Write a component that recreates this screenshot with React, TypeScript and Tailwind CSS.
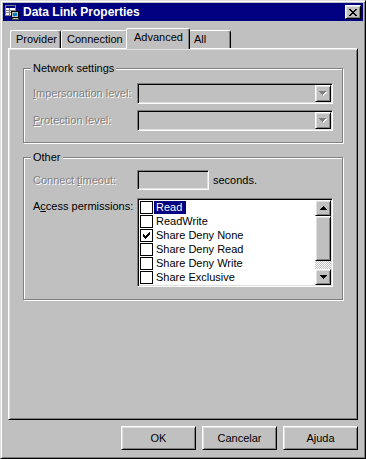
import React from "react";

// classic 3D frames
const raised =
  "border border-t-white border-l-white border-r-black border-b-black shadow-[inset_1px_1px_#dfdfdf,inset_-1px_-1px_#808080]";
const sunken =
  "border border-t-[#808080] border-l-[#808080] border-r-white border-b-white shadow-[inset_1px_1px_#000,inset_-1px_-1px_#dfdfdf]";
const etched = "border border-[#808080] shadow-[inset_1px_1px_#fff,1px_1px_#fff]";
const disabled = "text-[#808080] [text-shadow:1px_1px_0_#fff]";

const closeX = ["xx....xx", ".xx..xx.", "..xxxx..", "...xx...", "..xxxx..", ".xx..xx.", "xx....xx"];
const check = ["......x", ".....xx", "x...xxx", "xx.xxx.", "xxxxx..", ".xxx...", "..x...."];
const up = ["...x...", "..xxx..", ".xxxxx.", "xxxxxxx"];
const down = [...up].reverse();

const Pixels = ({ rows, fill, dx = 0, dy = 0 }: { rows: string[]; fill: string; dx?: number; dy?: number }) => (
  <>
    {rows.flatMap((r, y) =>
      r.split("").map((c, x) =>
        c === "x" ? <rect key={`${x}-${y}`} x={x + dx} y={y + dy} width={1} height={1} fill={fill} /> : null
      )
    )}
  </>
);

const Glyph = ({ rows, fill = "#000" }: { rows: string[]; fill?: string }) => (
  <svg width={rows[0].length} height={rows.length} shapeRendering="crispEdges">
    <Pixels rows={rows} fill={fill} />
  </svg>
);

const DisabledArrow = () => (
  <svg width={8} height={5} shapeRendering="crispEdges">
    <Pixels rows={down} fill="#fff" dx={1} dy={1} />
    <Pixels rows={down} fill="#808080" />
  </svg>
);

const AppIcon = () => (
  <svg width={16} height={16} shapeRendering="crispEdges">
    <rect x={1} y={1} width={11} height={11} fill="#808080" />
    <rect x={2} y={2} width={9} height={9} fill="#fff" />
    <rect x={2} y={2} width={9} height={2} fill="#000080" />
    <rect x={2} y={6} width={9} height={1} fill="#808080" />
    <rect x={2} y={8} width={9} height={1} fill="#808080" />
    <rect x={5} y={4} width={1} height={7} fill="#808080" />
    <rect x={7} y={7} width={8} height={7} fill="#000" />
    <rect x={8} y={8} width={6} height={5} fill="#c0c0c0" />
    <rect x={9} y={9} width={4} height={3} fill="#0080c0" />
    <rect x={8} y={14} width={7} height={2} fill="#404040" />
    <rect x={9} y={14} width={5} height={1} fill="#c0c0c0" />
  </svg>
);

const Tab = ({ label, width, active }: { label: string; width: string; active?: boolean }) =>
  active ? (
    <div
      className={`${width} h-[21px] -mb-px -mx-[2px] relative z-10 flex items-center pl-[7px] pb-[3px] bg-[#c0c0c0] border border-b-0 border-t-white border-l-white border-r-black rounded-tl-[2px] rounded-tr-[3px] shadow-[inset_-1px_0_#808080]`}
    >
      {label}
    </div>
  ) : (
    <div
      className={`${width} h-[18px] flex items-center pl-[5px] bg-[#c0c0c0] border border-b-0 border-t-white border-l-white border-r-black rounded-tl-[2px] rounded-tr-[3px] shadow-[inset_-1px_0_#808080]`}
    >
      {label}
    </div>
  );

const Group = ({ label, className, children }: { label: string; className: string; children: React.ReactNode }) => (
  <div className={`relative px-[9px] ${etched} ${className}`}>
    <span className="absolute left-[7px] -top-[7px] px-[2px] bg-[#c0c0c0]">{label}</span>
    {children}
  </div>
);

const Combo = () => (
  <div className={`w-[196px] h-[21px] p-px flex justify-end bg-[#c0c0c0] ${sunken}`}>
    <div className={`w-[16px] h-full flex items-center justify-center bg-[#c0c0c0] ${raised}`}>
      <DisabledArrow />
    </div>
  </div>
);

const permissions = [
  { label: "Read", checked: false, selected: true },
  { label: "ReadWrite", checked: false },
  { label: "Share Deny None", checked: true },
  { label: "Share Deny Read", checked: false },
  { label: "Share Deny Write", checked: false },
  { label: "Share Exclusive", checked: false },
];

const ListBox = () => (
  <div className={`w-[196px] h-[89px] p-px flex bg-white ${sunken}`}>
    <div className="flex-1 flex flex-col">
      {permissions.map((p) => (
        <div key={p.label} className="h-[14px] flex items-center pl-px">
          <div className="w-[13px] h-[13px] flex items-center justify-center bg-white border border-black">
            {p.checked && <Glyph rows={check} />}
          </div>
          <span
            className={`ml-px pl-[2px] pr-[4px] h-[13px] leading-[13px] ${p.selected ? "bg-[#000080] text-white" : ""}`}
          >
            {p.label}
          </span>
        </div>
      ))}
    </div>
    <div className="w-[16px] flex flex-col bg-[#c0c0c0]">
      <div className={`h-[16px] flex items-center justify-center bg-[#c0c0c0] ${raised}`}>
        <Glyph rows={up} />
      </div>
      <div className={`h-[45px] bg-[#c0c0c0] ${raised}`} />
      <div className="flex-1 bg-[image:repeating-conic-gradient(#c0c0c0_0_25%,#fff_0_50%)] bg-[length:2px_2px]" />
      <div className={`h-[16px] flex items-center justify-center bg-[#c0c0c0] ${raised}`}>
        <Glyph rows={down} />
      </div>
    </div>
  </div>
);

export default function App() {
  return (
    <div className="w-[366px] h-[459px] p-[2px] flex flex-col bg-[#c0c0c0] border border-t-[#dfdfdf] border-l-[#dfdfdf] border-r-black border-b-black shadow-[inset_1px_1px_#fff,inset_-1px_-1px_#808080] font-['Liberation_Sans',Arial,sans-serif] text-[11px] leading-[13px] text-black select-none">
      {/* title bar */}
      <div className="h-[18px] flex items-center pl-px pr-[2px] bg-[#000080]">
        <AppIcon />
        <span className="ml-[3px] text-[12px] font-bold text-white">Data Link Properties</span>
        <button className={`ml-auto w-[16px] h-[14px] flex items-center justify-center bg-[#c0c0c0] ${raised}`}>
          <Glyph rows={closeX} />
        </button>
      </div>

      <div className="flex flex-col px-[5px] pt-[7px]">
        {/* tabs */}
        <div className="relative z-10 h-[20px] flex items-end pl-[2px]">
          <Tab label="Provider" width="w-[51px]" />
          <Tab label="Connection" width="w-[67px]" />
          <Tab label="Advanced" width="w-[64px]" active />
          <Tab label="All" width="w-[43px]" />
        </div>

        {/* page */}
        <div
          className={`h-[372px] flex flex-col px-[14px] pt-[19px] border border-t-white border-l-white border-r-black border-b-black shadow-[inset_1px_1px_#dfdfdf,inset_-1px_-1px_#808080]`}
        >
          <Group label="Network settings" className="h-[75px] pt-[14px]">
            <div className="flex flex-col gap-[6px]">
              <div className="flex items-center">
                <span className={`w-[104px] shrink-0 ${disabled}`}>
                  <u>I</u>mpersonation level:
                </span>
                <Combo />
              </div>
              <div className="flex items-center">
                <span className={`w-[104px] shrink-0 ${disabled}`}>
                  <u>P</u>rotection level:
                </span>
                <Combo />
              </div>
            </div>
          </Group>

          <Group label="Other" className="mt-[14px] h-[143px] pt-[12px]">
            <div className="flex items-center">
              <span className={`w-[104px] shrink-0 ${disabled}`}>
                Connect <u>t</u>imeout:
              </span>
              <div className={`w-[72px] h-[20px] bg-[#c0c0c0] ${sunken}`} />
              <span className="ml-[4px]">seconds.</span>
            </div>
            <div className="mt-[8px] flex items-start">
              <span className="w-[104px] shrink-0 mt-px leading-[14px]">
                A<u>c</u>cess permissions:
              </span>
              <ListBox />
            </div>
          </Group>
        </div>

        {/* dialog buttons */}
        <div className="mt-[6px] flex justify-end gap-[6px]">
          {["OK", "Cancelar", "Ajuda"].map((b) => (
            <button key={b} className={`w-[75px] h-[24px] flex items-center justify-center bg-[#c0c0c0] ${raised}`}>
              {b}
            </button>
          ))}
        </div>
      </div>
    </div>
  );
}
